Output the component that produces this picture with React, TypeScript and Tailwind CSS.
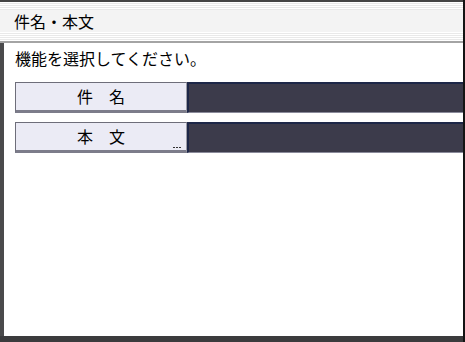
const font = { fontFamily: '"Noto Sans CJK JP", "Noto Sans", sans-serif' };

type RowProps = {
  label: string
  more?: boolean
}

function Row({ label, more }: RowProps) {
  return (
    <div className="flex h-[31px]">
      <div className="relative flex w-[172px] items-center justify-center border-t border-l border-r border-[#6e6e7a] border-r-[#9c9ca6] border-b-[3px] border-b-[#7c7c8a] bg-[#ebebf5] text-[16px] leading-none text-black">
        <span className="pb-[1px]">{label}</span>
        {more && (
          <span className="absolute right-[5px] bottom-[2px] flex gap-[1px]">
            <span className="h-[1px] w-[2px] bg-[#333]" />
            <span className="h-[1px] w-[2px] bg-[#333]" />
            <span className="h-[1px] w-[2px] bg-[#333]" />
          </span>
        )}
      </div>
      <div className="flex-1 border-t-2 border-l-2 border-[#1d2748] border-b border-b-[#8a8a9a] bg-[#3c3b4b]" />
    </div>
  )
}

export default function App() {
  return (
    <div
      className="flex h-[342px] w-[465px] flex-col overflow-hidden border-r-2 border-[#141414] bg-white"
      style={font}
    >
      <div className="flex h-[43px] flex-col border-t-2 border-[#454545]">
        <div className="flex flex-1 flex-col bg-[repeating-linear-gradient(to_bottom,#ffffff_0px,#ffffff_1px,#e9e9e9_1px,#e9e9e9_2px)]">
          <div className="h-[8px]" />
          <div className="flex h-[22px] items-center bg-[#f3f3f3] pl-[14px] text-[16px] leading-none text-black">
            件名・本文
          </div>
        </div>
        <div className="h-[2px] bg-[#a4a4a4]" />
      </div>
      <div className="flex flex-1">
        <div className="w-[4px] bg-[#4a4a4c]" />
        <div className="flex flex-1 flex-col pl-[11px] pt-[5px]">
          <div className="h-[20px] text-[16px] leading-[20px] text-black">機能を選択してください。</div>
          <div className="mt-[14px] flex flex-col gap-[9px]">
            <Row label="件　名" />
            <Row label="本　文" more />
          </div>
        </div>
      </div>
      <div className="h-[6px] bg-[#3b3b3d]" />
    </div>
  )
}
